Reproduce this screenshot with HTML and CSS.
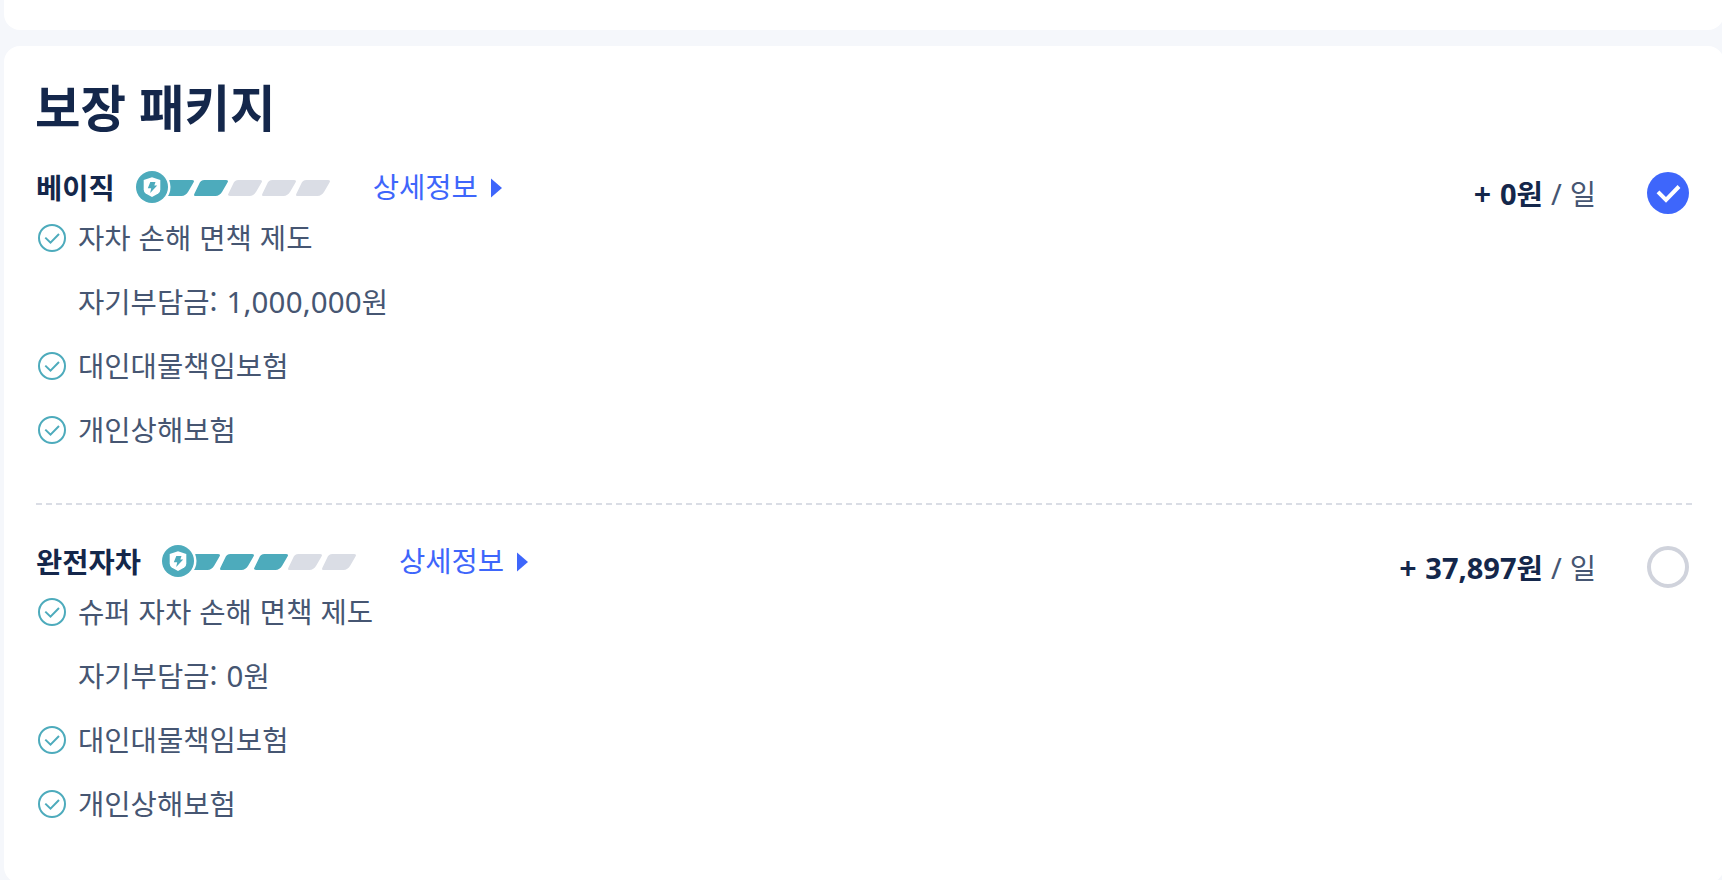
FILE: index.html
```html
<!DOCTYPE html>
<html lang="ko">
<head>
    <meta charset="UTF-8">
    <meta name="viewport" content="width=device-width, initial-scale=1.0">
    <title>보장 패키지</title>
    <link rel="stylesheet" href="styles.css">
</head>
<body>
    <!-- Shared icons -->
    <svg class="sprite" width="0" height="0">
        <symbol id="check" viewBox="0 0 28 28">
            <circle cx="14" cy="14" r="13" fill="none" stroke="#4dabbc" stroke-width="2"/>
            <path d="M7.3 13.6l5.2 5 8.5-8.6" fill="none" stroke="#4dabbc" stroke-width="2"/>
        </symbol>
        <symbol id="bar" viewBox="0 0 35 16">
            <path d="M9.3 0H32.5Q35.5 0 34 2.6L28.8 11.6Q26.2 16 22 16H2.5Q-.5 16 1 13.4L5.6 4Q7 0 11 0Z"/>
        </symbol>
        <symbol id="shield" viewBox="0 0 36 36">
            <circle cx="16" cy="16" r="18.500" fill="#fff"/>
            <circle cx="16" cy="16" r="16" fill="#4dabbc"/>
            <path d="M16 6.300l8.300 2.700v9.500q0 2.600-2 4L16 26l-6.300-3.500q-2-1.400-2-4V9z" fill="#fff"/>
            <path d="M14.300 11h5.200l-1.200 3.600h2.900L14.200 22l1-4.800h-3.400z" fill="#4dabbc"/>
        </symbol>
    </svg>

    <div class="card card-prev"></div>

    <div class="card card-package">
        <h1>보장 패키지</h1>

        <!-- Basic -->
        <div class="package">
            <div class="info">
                <div class="head">
                    <h2>베이직</h2>
                    <svg class="meter" width="195" height="32" viewBox="0 0 195 32">
                        <use class="on" href="#bar" x="23.500" y="9" width="35" height="16"/>
                        <use class="on" href="#bar" x="57.500" y="9" width="35" height="16"/>
                        <use class="off" href="#bar" x="91.500" y="9" width="35" height="16"/>
                        <use class="off" href="#bar" x="125.500" y="9" width="35" height="16"/>
                        <use class="off" href="#bar" x="159.500" y="9" width="35" height="16"/>
                        <use href="#shield" width="36" height="36"/>
                    </svg>
                    <a class="detail" href="#"><span>상세정보</span> <svg width="11" height="20" viewBox="0 0 11 20"><path d="M0 .5L11 10 0 19.500z" fill="#3e66fb"/></svg></a>
                </div>
                <ul>
                    <li><svg class="check"><use href="#check"/></svg><span>자차 손해 면책 제도</span></li>
                    <li class="sub"><span>자기부담금: <span class="num">1,000,000</span>원</span></li>
                    <li><svg class="check"><use href="#check"/></svg><span>대인대물책임보험</span></li>
                    <li><svg class="check"><use href="#check"/></svg><span>개인상해보험</span></li>
                </ul>
            </div>
            <div class="price"><b>+ <span class="num">0</span>원</b> <span class="num">/</span> 일</div>
            <div class="radio checked">
                <svg width="42" height="42" viewBox="0 0 42 42"><path d="M11 19.800l8 8L32 14.500" fill="none" stroke="#fff" stroke-width="4"/></svg>
            </div>
        </div>

        <!-- Full cover -->
        <div class="package">
            <div class="info">
                <div class="head">
                    <h2>완전자차</h2>
                    <svg class="meter" width="195" height="32" viewBox="0 0 195 32">
                        <use class="on" href="#bar" x="23.500" y="9" width="35" height="16"/>
                        <use class="on" href="#bar" x="57.500" y="9" width="35" height="16"/>
                        <use class="on" href="#bar" x="91.500" y="9" width="35" height="16"/>
                        <use class="off" href="#bar" x="125.500" y="9" width="35" height="16"/>
                        <use class="off" href="#bar" x="159.500" y="9" width="35" height="16"/>
                        <use href="#shield" width="36" height="36"/>
                    </svg>
                    <a class="detail" href="#"><span>상세정보</span> <svg width="11" height="20" viewBox="0 0 11 20"><path d="M0 .5L11 10 0 19.500z" fill="#3e66fb"/></svg></a>
                </div>
                <ul>
                    <li><svg class="check"><use href="#check"/></svg><span>슈퍼 자차 손해 면책 제도</span></li>
                    <li class="sub"><span>자기부담금: <span class="num">0</span>원</span></li>
                    <li><svg class="check"><use href="#check"/></svg><span>대인대물책임보험</span></li>
                    <li><svg class="check"><use href="#check"/></svg><span>개인상해보험</span></li>
                </ul>
            </div>
            <div class="price"><b>+ <span class="num">37,897</span>원</b> <span class="num">/</span> 일</div>
            <div class="radio"></div>
        </div>
    </div>
</body>
</html>
```

FILE: styles.css
```css
* {
    box-sizing: border-box;
}

body {
    margin: 0;
    height: 880px;
    overflow: hidden;
    background: #f5f7fb;
    color: #465672;
    font-family: "Noto Sans CJK KR", sans-serif;
    font-size: 28.6px;
}

.sprite {
    display: block;
}

.card {
    width: 1720px;
    margin-left: 4px;
    background: #fff;
    border-radius: 16px;
}

.card-prev {
    height: 30px;
    border-radius: 0 0 16px 16px;
    margin-bottom: 16px;
}

.card-package {
    height: 837px;
    padding: 30px 32px 32px;
}

h1 {
    margin: 0 0 2px -1px;
    height: 60px;
    line-height: 60px;
    font-size: 49.5px;
    font-weight: 700;
    word-spacing: -1px;
    color: #14274b;
}

.package {
    display: flex;
    height: 365px;
    padding-top: 32px;
}

.package + .package {
    height: 375px;
    padding-top: 39px;
    border-top: 2px dashed #dadde5;
}

.info {
    flex: 1;
}

.head {
    display: flex;
    align-items: center;
    height: 34px;
    line-height: 34px;
}

h2 {
    margin: 0 21px 0 0;
    font-size: 28.5px;
    font-weight: 700;
    color: #14274b;
}

.meter {
    margin-right: 42px;
}

.on {
    fill: #4dabbc;
}

.off {
    fill: #dadde5;
}

.detail {
    display: flex;
    align-items: center;
    gap: 13px;
    color: #3e66fb;
    text-decoration: none;
}

.detail span {
    padding-bottom: 3px;
}

.detail svg {
    margin-top: 2px;
}

ul {
    margin: 0;
    padding: 2px 0 0;
    list-style: none;
}

li {
    display: flex;
    align-items: center;
    height: 64px;
    padding-left: 2px;
}

li > span {
    padding-bottom: 3px;
}

.check {
    width: 28px;
    height: 28px;
    margin-right: 12px;
}

.sub {
    padding-left: 42px;
}

.num {
    font-family: "Noto Sans", sans-serif;
    font-size: 29px;
}

.sub .num {
    font-size: 29.5px;
    letter-spacing: 0.15px;
    margin-left: 1px;
}

.price {
    height: 42px;
    margin-top: 2px;
    line-height: 42px;
    white-space: nowrap;
}

.price b {
    font-weight: 700;
    color: #14274b;
}

.price b .num {
    margin-left: 1px;
}

.radio {
    width: 42px;
    height: 42px;
    margin: 2px 3px 0 51px;
    border: 4px solid #d0d3dc;
    border-radius: 50%;
}

.radio.checked {
    border: none;
    background: #3e66fb;
}

.radio svg {
    display: block;
}
```
